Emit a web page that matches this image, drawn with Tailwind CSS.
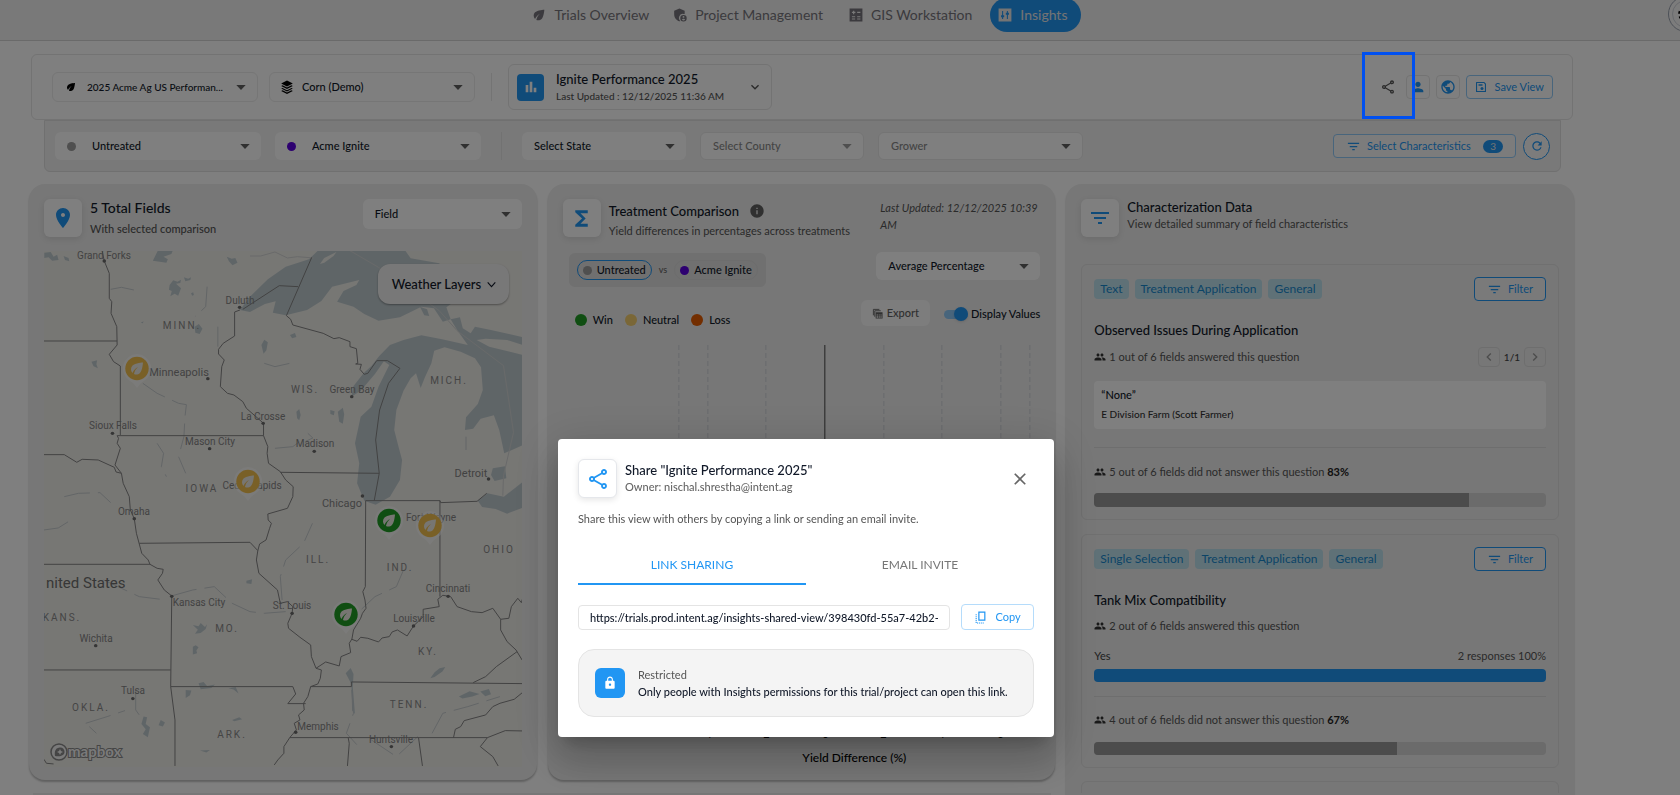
<!DOCTYPE html>
<html lang="en">
<head>
    <meta charset="utf-8">
    <meta name="viewport" content="width=device-width, initial-scale=1.0">
    <title>Insights - Ignite Performance 2025</title>
    <script src="https://cdn.jsdelivr.net/npm/@tailwindcss/browser@4"></script>
</head>
<body class="h-screen overflow-hidden bg-white font-['Lato','Noto_Sans',sans-serif] text-[11px] leading-4 font-medium text-gray-900">

    <!-- Icon set -->
    <svg class="hidden" xmlns="http://www.w3.org/2000/svg">
        <symbol id="i-leaf" viewBox="0 0 24 24"><path d="M6.05 8.05c-2.73 2.73-2.73 7.15-.02 9.88 1.47-3.4 4.09-6.24 7.36-7.93-2.77 2.34-4.71 5.61-5.39 9.32 2.6 1.23 5.8.78 7.95-1.37C19.43 14.47 20 4 20 4S9.53 4.57 6.05 8.05z"/></symbol>
        <symbol id="i-layers" viewBox="0 0 24 24"><path d="M12 1 2 6l10 5 10-5z"/><path d="m4.300 9.100-2.300 1.200 10 5 10-5-2.300-1.200L12 13z"/><path d="m4.300 13.500-2.300 1.200 10 5 10-5-2.300-1.200-7.700 3.900z"/><path d="m4.300 17.600-2.300 1.200L12 23.800l10-5-2.300-1.200-7.700 3.900z"/></symbol>
        <symbol id="i-shield" viewBox="0 0 24 24"><path d="M11 1 2 4.500v6.200c0 5.600 3.800 10.800 9 12.100.6-.1 1.100-.3 1.600-.5A7 7 0 0 1 18 10.100c.7 0 1.400.1 2 .3V4.500z"/><path d="M18 12a5.500 5.500 0 1 0 0 11 5.500 5.500 0 0 0 0-11zm0 1.700a1.600 1.600 0 1 1 0 3.200 1.600 1.600 0 0 1 0-3.200zm0 7.700c-1.100 0-2.100-.6-2.700-1.500.1-.9 1.800-1.400 2.700-1.400s2.600.5 2.700 1.400c-.6.9-1.600 1.500-2.700 1.500z"/></symbol>
        <symbol id="i-grid" viewBox="0 0 24 24"><path fill-rule="evenodd" d="M1 1h22v22H1zM7 4.500v2H5v2h2v2h2v-2h2v-2H9v-2zM14 6.500h5.500v2H14zM5 14h5.500v1.800H5zM5 17.800h5.500v1.800H5zM14 14h5.500v1.800H14zM14 17.800h5.500v1.800H14z"/></symbol>
        <symbol id="i-sliders" viewBox="0 0 24 24"><path fill-rule="evenodd" d="M1 1h22v22H1zM7 5v7.500H5.200v3.500H7v3h1.800v-3h1.800v-3.500H8.800V5zM15.200 5v3h-1.800v3.500h1.800V19H17v-7.500h1.800V8H17V5z"/></symbol>
        <symbol id="i-bars" viewBox="0 0 24 24"><path d="M4 9h4v11H4zM10 4h4v16h-4zM16 13h4v7h-4z"/></symbol>
        <symbol id="i-drop" viewBox="0 0 24 24"><path d="m5 9 7 7.500L19 9z"/></symbol>
        <symbol id="i-chevron" viewBox="0 0 24 24"><path d="M7.410 8.590 12 13.170l4.590-4.580L18 10l-6 6-6-6z"/></symbol>
        <symbol id="i-chevron-thin" viewBox="0 0 24 24"><path fill="none" stroke="currentColor" stroke-width="2" d="m5 8 7 8 7-8"/></symbol>
        <symbol id="i-left" viewBox="0 0 24 24"><path d="M15.400 7.400 14 6l-6 6 6 6 1.400-1.400-4.600-4.600z"/></symbol>
        <symbol id="i-right" viewBox="0 0 24 24"><path d="M8.600 7.400 10 6l6 6-6 6-1.400-1.400 4.600-4.600z"/></symbol>
        <symbol id="i-share" viewBox="0 0 24 24"><path d="M18 16.080c-.76 0-1.440.3-1.960.77L8.910 12.700c.05-.23.09-.46.09-.7s-.04-.47-.09-.7l7.050-4.110c.54.5 1.250.81 2.040.81 1.660 0 3-1.340 3-3s-1.340-3-3-3-3 1.340-3 3c0 .24.04.47.09.7L8.040 9.810C7.500 9.310 6.790 9 6 9c-1.660 0-3 1.340-3 3s1.340 3 3 3c.79 0 1.500-.31 2.040-.81l7.120 4.160c-.05.21-.08.43-.08.65 0 1.610 1.310 2.920 2.920 2.920s2.920-1.310 2.920-2.920-1.310-2.920-2.920-2.920zM18 4c.55 0 1 .45 1 1s-.45 1-1 1-1-.45-1-1 .45-1 1-1zM6 13c-.55 0-1-.45-1-1s.45-1 1-1 1 .45 1 1-.45 1-1 1zm12 7.020c-.55 0-1-.45-1-1s.45-1 1-1 1 .45 1 1-.45 1-1 1z"/></symbol>
        <symbol id="i-person" viewBox="0 0 24 24"><path d="M12 12c2.210 0 4-1.790 4-4s-1.790-4-4-4-4 1.790-4 4 1.790 4 4 4zm0 2c-2.670 0-8 1.340-8 4v2h16v-2c0-2.660-5.330-4-8-4z"/></symbol>
        <symbol id="i-globe" viewBox="0 0 24 24"><path d="M12 2C6.480 2 2 6.480 2 12s4.480 10 10 10 10-4.480 10-10S17.520 2 12 2zm-1 17.930c-3.950-.49-7-3.850-7-7.930 0-.62.08-1.210.21-1.790L9 15v1c0 1.100.9 2 2 2v1.930zm6.900-2.540c-.26-.81-1-1.390-1.900-1.390h-1v-3c0-.55-.45-1-1-1H8v-2h2c.55 0 1-.45 1-1V7h2c1.100 0 2-.9 2-2v-.41c2.930 1.190 5 4.060 5 7.410 0 2.080-.8 3.970-2.100 5.390z"/></symbol>
        <symbol id="i-save" viewBox="0 0 24 24"><path fill-rule="evenodd" d="M3 2h15.500L22 5.500V22H2V3a1 1 0 0 1 1-1zm1.200 2.200v15.600h15.600V6.500l-2.300-2.300z"/><path d="M7 6.500h8v3H7z"/><circle cx="14" cy="15" r="3"/></symbol>
        <symbol id="i-filter" viewBox="0 0 24 24"><path d="M10 18h4v-2h-4v2zM3 6v2h18V6H3zm3 7h12v-2H6v2z"/></symbol>
        <symbol id="i-refresh" viewBox="0 0 24 24"><path d="M17.650 6.350C16.200 4.900 14.210 4 12 4c-4.420 0-7.990 3.580-7.990 8s3.570 8 7.990 8c3.730 0 6.840-2.550 7.730-6h-2.080c-.82 2.330-3.040 4-5.650 4-3.310 0-6-2.690-6-6s2.690-6 6-6c1.660 0 3.140.69 4.220 1.780L13 11h7V4l-2.350 2.350z"/></symbol>
        <symbol id="i-place" viewBox="0 0 24 24"><path d="M12 2C8.130 2 5 5.130 5 9c0 5.250 7 13 7 13s7-7.750 7-13c0-3.870-3.130-7-7-7zm0 9c-1.100 0-2-.9-2-2s.9-2 2-2 2 .9 2 2-.9 2-2 2z"/></symbol>
        <symbol id="i-sigma" viewBox="0 0 24 24"><path d="M18 4H6v2l6.500 6L6 18v2h12v-3h-7l5-5-5-5h7z"/></symbol>
        <symbol id="i-info" viewBox="0 0 24 24"><path d="M12 2C6.480 2 2 6.480 2 12s4.480 10 10 10 10-4.480 10-10S17.520 2 12 2zm1 15h-2v-6h2v6zm0-8h-2V7h2v2z"/></symbol>
        <symbol id="i-people" viewBox="0 0 24 24"><path d="M16 11c1.660 0 3-1.340 3-3s-1.340-3-3-3-3 1.340-3 3 1.340 3 3 3zm-8 0c1.660 0 3-1.340 3-3S9.660 5 8 5 5 6.340 5 8s1.340 3 3 3zm0 2c-2.330 0-7 1.170-7 3.500V19h14v-2.500c0-2.330-4.670-3.500-7-3.500zm8 0c-.29 0-.62.02-.97.05 1.160.84 1.970 1.970 1.970 3.450V19h6v-2.500c0-2.330-4.670-3.500-7-3.500z"/></symbol>
        <symbol id="i-lock" viewBox="0 0 24 24"><path d="M18 8h-1V6c0-2.760-2.240-5-5-5S7 3.240 7 6v2H6c-1.100 0-2 .9-2 2v10c0 1.100.9 2 2 2h12c1.100 0 2-.9 2-2V10c0-1.100-.9-2-2-2zm-6 9c-1.100 0-2-.9-2-2s.9-2 2-2 2 .9 2 2-.9 2-2 2zm3.100-9H8.900V6c0-1.710 1.390-3.100 3.100-3.100 1.710 0 3.100 1.390 3.100 3.100v2z"/></symbol>
        <symbol id="i-close" viewBox="0 0 24 24"><path d="M19 6.400 17.600 5 12 10.600 6.400 5 5 6.400l5.600 5.600L5 17.600 6.400 19l5.600-5.600 5.600 5.600 1.400-1.400-5.600-5.600z"/></symbol>
        <symbol id="i-copy" viewBox="0 0 24 24"><path fill="none" stroke="currentColor" stroke-width="2.200" d="M9 2h11v15H9z"/><path fill="none" stroke="currentColor" stroke-width="2" stroke-dasharray="2 1.500" d="M4 6v16h14"/></symbol>
        <symbol id="i-export" viewBox="0 0 24 24"><path fill="none" stroke="currentColor" stroke-width="2" d="M3 16V3h13M6 19V6h13"/><path fill-rule="evenodd" d="M8 9h15v14H8zm2 5v2.500h3V14zm4.500 0v2.500H17V14zm4 0v2.500H21V14zM10 18v3h3v-3zm4.500 0v3H17v-3zm4 0v3H21v-3z"/></symbol>
        <symbol id="i-pin" viewBox="0 0 32 38"><path d="M16 1a14.500 14.500 0 0 1 7 27l-3 2-4 5-4-5-3-2a14.500 14.500 0 0 1 7-27z" fill="#fff" fill-opacity=".5"/><circle cx="16" cy="15.500" r="11.700" fill="currentColor"/><path transform="translate(7 6.500) scale(.75)" fill="#efece4" d="M6.050 8.050c-2.730 2.730-2.730 7.150-.02 9.880 1.470-3.400 4.090-6.240 7.360-7.930-2.770 2.340-4.710 5.610-5.390 9.320 2.600 1.230 5.800.78 7.950-1.370C19.430 14.470 20 4 20 4S9.530 4.570 6.050 8.050z"/></symbol>
    </svg>

    <!-- Navigation -->
    <header class="relative flex h-[41px] items-start justify-center overflow-hidden border-b border-[#d4d4d4] bg-[#f2f2f2] pr-[68px]">
        <nav class="-mt-0.5 flex items-center text-sm font-normal text-[#77757c]">
            <a href="#" class="flex h-[34px] items-center gap-2 pr-6"><svg class="size-4 fill-current"><use href="#i-leaf"/></svg>Trials Overview</a>
            <a href="#" class="flex h-[34px] items-center gap-2 pr-[26px]"><svg class="size-[14px] fill-current"><use href="#i-shield"/></svg>Project Management</a>
            <a href="#" class="flex h-[34px] items-center gap-2 pr-[18px]"><svg class="size-[14px] fill-current"><use href="#i-grid"/></svg>GIS Workstation</a>
            <a href="#" class="flex h-[34px] items-center gap-2 rounded-full bg-[#2196f3] pr-3.5 pl-2 text-[#e8e8e8]"><svg class="size-[14px] fill-current"><use href="#i-sliders"/></svg>Insights</a>
        </nav>
        <button type="button" aria-label="Settings" class="absolute -top-1 -right-6 flex size-9 items-center justify-center rounded-full border border-gray-400 bg-[#f8f8f8]">
            <span class="flex size-7 items-center justify-center rounded-full border border-gray-300">
                <svg class="size-[18px] fill-none stroke-black stroke-[3]" viewBox="0 0 24 24"><circle cx="12" cy="12" r="9" stroke-dasharray="3.500 3.600"/></svg>
            </span>
        </button>
    </header>

    <main class="pt-[13px] pr-[106px] pl-[29px]">

        <!-- View toolbar -->
        <section class="mr-px ml-0.5 flex h-[66px] items-center rounded-md border border-[#e6e6e6] pr-[19px] pl-5">
            <label class="relative mr-[11px] flex h-[30px] w-[206px] items-center rounded-md border border-[#ececec] pl-3">
                <svg class="mr-2.5 size-3 shrink-0"><use href="#i-leaf"/></svg>
                <select aria-label="Trial" class="w-full appearance-none text-[10px]"><option>2025 Acme Ag US Performan...</option></select>
                <svg class="pointer-events-none absolute right-2 size-4 fill-[#616161]"><use href="#i-drop"/></svg>
            </label>
            <label class="relative flex h-[30px] w-[206px] items-center rounded-md border border-[#ececec] pl-2.5">
                <svg class="mr-2 size-[14px] shrink-0"><use href="#i-layers"/></svg>
                <select aria-label="Crop" class="w-full appearance-none"><option>Corn (Demo)</option></select>
                <svg class="pointer-events-none absolute right-2 size-4 fill-[#616161]"><use href="#i-drop"/></svg>
            </label>
            <div class="mx-4 h-7 w-px bg-[#e8e8e8]"></div>
            <button type="button" class="flex h-[46px] w-[264px] items-center rounded-md border border-[#e6e6e6] px-2 text-left">
                <span class="mr-3 flex size-[27px] items-center justify-center rounded bg-[#2196f3]"><svg class="size-4 fill-white"><use href="#i-bars"/></svg></span>
                <span class="flex flex-col">
                    <span class="text-[13px] leading-[17px]">Ignite Performance 2025</span>
                    <span class="text-[10px] text-[#555]">Last Updated : 12/12/2025 11:36 AM</span>
                </span>
                <svg class="ml-auto size-4 fill-[#555]"><use href="#i-chevron"/></svg>
            </button>
            <div class="ml-auto flex items-center gap-1.5 font-normal text-[#2196f3]">
                <button type="button" aria-label="Share" class="flex size-6 items-center justify-center text-[#555]"><svg class="size-4 fill-current"><use href="#i-share"/></svg></button>
                <button type="button" aria-label="People" class="flex size-6 items-center justify-center rounded border border-[#e6e6e6]"><svg class="size-4 fill-current"><use href="#i-person"/></svg></button>
                <button type="button" aria-label="Public" class="flex size-6 items-center justify-center rounded border border-[#e6e6e6]"><svg class="size-4 fill-current"><use href="#i-globe"/></svg></button>
                <button type="button" class="flex h-6 items-center gap-2 rounded border border-[#90caf9] px-2"><svg class="size-3 fill-current"><use href="#i-save"/></svg>Save View</button>
            </div>
        </section>

        <!-- Filters -->
        <section class="mr-[13px] ml-[15px] flex h-[52px] items-center rounded-b-md border border-[#e0e0e0] bg-[#f3f3f3] px-2.5">
            <label class="relative mr-[14px] flex h-7 w-[206px] items-center rounded-md bg-white pl-3">
                <span class="mr-4 size-[9px] shrink-0 rounded-full bg-[#9e9e9e]"></span>
                <select aria-label="Baseline treatment" class="w-full appearance-none"><option>Untreated</option></select>
                <svg class="pointer-events-none absolute right-2 size-4 fill-[#616161]"><use href="#i-drop"/></svg>
            </label>
            <label class="relative flex h-7 w-[206px] items-center rounded-md bg-white pl-3">
                <span class="mr-4 size-[9px] shrink-0 rounded-full bg-[#5b00e0]"></span>
                <select aria-label="Treatment" class="w-full appearance-none"><option>Acme Ignite</option></select>
                <svg class="pointer-events-none absolute right-2 size-4 fill-[#616161]"><use href="#i-drop"/></svg>
            </label>
            <div class="mx-5 h-7 w-px bg-[#e4e4e4]"></div>
            <label class="relative mr-[14px] flex h-7 w-[164px] items-center rounded-md bg-white pl-3">
                <select aria-label="State" class="w-full appearance-none"><option>Select State</option></select>
                <svg class="pointer-events-none absolute right-2 size-4 fill-[#616161]"><use href="#i-drop"/></svg>
            </label>
            <label class="relative mr-[14px] flex h-7 w-[164px] items-center rounded-md border border-[#e8e8e8] bg-white pl-3">
                <select aria-label="County" disabled class="w-full appearance-none text-[#888] opacity-100"><option>Select County</option></select>
                <svg class="pointer-events-none absolute right-2 size-4 fill-[#9e9e9e]"><use href="#i-drop"/></svg>
            </label>
            <label class="relative flex h-7 w-[205px] items-center rounded-md border border-[#e8e8e8] bg-white pl-3">
                <select aria-label="Grower" class="w-full appearance-none text-[#888]"><option>Grower</option></select>
                <svg class="pointer-events-none absolute right-2 size-4 fill-[#616161]"><use href="#i-drop"/></svg>
            </label>
            <button type="button" class="ml-auto flex h-6 w-[183px] items-center rounded border border-[#90caf9] bg-white/50 px-3 font-normal text-[#2196f3]">
                <svg class="mr-1.5 size-[15px] fill-current"><use href="#i-filter"/></svg>Select Characteristics
                <span class="ml-auto rounded-full bg-[#2196f3] px-[7px] text-[10px] leading-[13px] text-[#e8e8e8]">3</span>
            </button>
            <button type="button" aria-label="Refresh" class="ml-[7px] flex size-[27px] items-center justify-center rounded-full border border-[#2196f3] bg-white/50 text-[#2196f3]"><svg class="size-[14px] fill-current"><use href="#i-refresh"/></svg></button>
        </section>

        <div class="mt-3 grid grid-cols-3 gap-x-[11px] gap-y-[13px]">

            <!-- Fields map -->
            <section class="rounded-2xl bg-[#eee] px-[15px] pt-[15px] pb-[13px] shadow-[0_2px_2px_rgba(0,0,0,0.25)]">
                <div class="flex h-[52px] items-start">
                    <span class="flex size-[38px] items-center justify-center rounded-md bg-white shadow-[0_2px_6px_rgba(0,0,0,0.1)]"><svg class="size-6 fill-[#2196f3]"><use href="#i-place"/></svg></span>
                    <div class="ml-2">
                        <h2 class="text-sm leading-[18px]">5 Total Fields</h2>
                        <p class="mt-1 text-[#555]">With selected comparison</p>
                    </div>
                    <label class="relative ml-auto flex h-[30px] w-[159px] items-center rounded-md bg-white pl-3">
                        <select aria-label="Group by" class="w-full appearance-none"><option>Field</option></select>
                        <svg class="pointer-events-none absolute right-2 size-4 fill-[#616161]"><use href="#i-drop"/></svg>
                    </label>
                </div>
                <div class="relative h-[516px] overflow-hidden bg-[#efeee9]">
                    <svg class="h-full w-full" viewBox="0 0 479 516" preserveAspectRatio="xMinYMin slice" role="img" aria-label="Map of fields">
                        <g transform="translate(-44 -21) scale(.3571 .3333)">
                            <!-- Lakes -->
                            <g fill="#bfcbcf">
                                <path d="M890 62 865 88 800 110 750 148 700 200 672 240 700 246 742 222 772 214 764 248 800 256 860 240 900 213 930 170 1006 150 998 165 962 183 944 215 990 230 1020 252 1060 272 1120 262 1180 230 1215 235 1240 275 1262 268 1250 232 1275 212 1290 180 1230 100 1150 85 1135 62z"/>
                                <path d="M1262 268 1288 262 1296 295 1318 310 1330 290 1375 300 1465 322 1465 345 1420 330 1360 326 1335 330 1370 350 1465 375 1465 645 1412 670 1398 600 1383 556 1346 566 1325 596 1302 600 1305 562 1338 522 1352 480 1347 412 1330 385 1290 365 1245 352 1216 362 1208 400 1190 442 1178 474 1165 430 1150 445 1130 482 1110 540 1104 600 1116 650 1126 690 1120 750 1092 800 1052 824 1020 812 1000 760 1006 700 994 640 1010 560 1040 530 1060 470 1090 405 1075 394 1050 432 1010 482 984 500 990 468 1018 430 1040 408 1062 378 1092 345 1130 330 1180 316 1238 328 1310 345 1280 300z"/>
                                <path d="m1380 715 34-6 4 36-33 8-10-18zM1338 812l27-22 46 10 54-45v78l-45 18-32-14-38-6z"/>
                                <path d="m428 92 14-30 44-6-6 16-22 8 12 8-4 10zM475 165l10-14 12 4 10-6-2 10-12 2 14 14-8 22-10-6-12 8 4-16-8-4zM545 290l12-8 10 14-8 16-12-4zM124 68l18-2 8 14 10-6 4 16-18 2-10-10-12 2zM635 80l14 6 10-2 6 14-14 8-10-12zM946 545l14-12 4 20-4 28-10-6zM732 345l8-16 10 8-4 24-8 10zM256 395l16-4-2 12 4 12-12-6zM830 545l8-8 4 18-4 16-6-6zM925 540l12 4-2 12-10-4zM812 315l14-6 4 12-12 4zM1176 230l20 8 6 20-14-2zM535 190l6-3 2 8-5 2zM515 142l12 4 8-4-2 8-14 4zM178 78l14 6 2 10-12-4zM394 278l8-4-2 6z"/>
                                <path d="m540 1185 16 4 6-10 12 12 6-8-4 14-14 12-16 2 8-12zM540 1250l8-4 8 6-6 10 2 8-12 4zM520 1380l16 2-4 14-12 8zM556 1360l14-4 10 12 22-4-10 10-30 4zM640 1375l20-4 8 20-14-12zM402 1460l10 2-4 20 12 10-6 30-14-10 8-14-12-16zM450 1470l12 8-6 12-12-4zM1205 1345l12-18 14-12 16-4-8 14-22 16zM968 1330l14-16 8 18-2 40 6 80-8-10-2-80zM650 1470l20-8 8 6-22 6zM560 1562l28-2-10 8zM690 1052l16-4-2 14-14-2zM1285 1400l30-16 28 8-20 8-28 6zM1345 1385l24-8 6 16-16 6z"/>
                            </g>
                            <path fill="#efeee9" d="m896 102 12-18 34-18-8 12-26 20z"/>
                            <!-- Rivers -->
                            <g fill="none" stroke="#c6ccce" stroke-dasharray="26 8">
                                <path vector-effect="non-scaling-stroke" d="M310 178 340 172 375 180M400 460 440 490 500 520 522 524 518 560 515 620 500 680 520 730M440 640l18 30-6 40 14 30M580 170l-4 60-30 30M740 400l30 10 50-12M770 655l50-5 35-28M610 290v60M862 610l14 14-20 10M1305 620v40M180 800l40-10 60-2 30 30M123 900l40-6 30-20"/>
                                <path vector-effect="non-scaling-stroke" d="M790 1110 785 1040 800 990 850 940 875 880M480 1098 540 1080 600 1070 650 1120 700 1145 740 1150 800 1145M1130 1020 1110 1070 1050 1100 1010 1140M985 1380 990 1450 970 1510 1000 1545M1040 1530 1110 1580 1170 1520M1210 1510 1240 1450 1310 1430 1400 1400M290 1050l40 20 60 30 60 8M240 1480l60-20 50-18M250 1490l20 20M380 1380v60l20 30"/>
                            </g>
                            <path fill="none" stroke="#d2d4d4" vector-effect="non-scaling-stroke" d="M700 78h30l40-12 35 18 28-4 45 4M980 62l80 50 170 130 50 60 130 105 28 200-28 130-2 60"/>
                            <!-- State lines -->
                            <g fill="none" stroke="#858585" stroke-width="1" stroke-linejoin="round">
                                <path vector-effect="non-scaling-stroke" d="M286 62 292 93 306 130 306 205 313 215 311 250 327 290 328 345 306 373 318 395 337 408 337 615M123 333H328M328 617H738M672 240 657 246 657 318 625 340 612 358 612 372 628 390 621 410 617 470 637 490 655 495 680 515 690 535 738 580 738 617 750 650 748 670 752 700 785 725 800 750 821 770 820 800 805 835 750 852 751 870 760 880 755 895 745 930 727 942 722 962 718 990 725 1030 777 1080 785 1120 805 1115 820 1130 818 1150 806 1180 808 1195 840 1222 870 1245 872 1280 885 1315 900 1320 897 1345 890 1362 870 1370 862 1400 850 1420 852 1440 836 1455 840 1470 824 1480 830 1500 812 1522 795 1550 795 1570 778 1590 768 1605"/>
                                <path vector-effect="non-scaling-stroke" d="M785 727 1062 730M680 238 782 167 835 170M873 82 802 257 814 268 820 285 905 310 935 326 950 323 980 335 980 350 998 356 1002 400 996 402 1012 403 1008 418 1020 433 1030 430 1055 392 1085 392 1120 415 1088 460 1063 540 1052 630 1062 730 1048 812M1024 812H1232L1234 818 1336 814 1363 790M123 674H180L215 697 230 688 275 690 320 712 325 726 340 730M328 617 332 625 328 640 337 655 322 705 340 730 345 760 362 800 365 840 376 866 382 910 390 942 397 970 415 990 420 1003 440 1015 457 1018 455 1030 442 1050 460 1080 481 1098"/>
                                <path vector-effect="non-scaling-stroke" d="M390 940 700 937 722 962M123 1003H420M481 1098 478 1370 490 1470 490 1608M123 1320H478M478 1370H820L828 1392 806 1421H856M1024 812 1023 1070 1016 1085 1022 1110 1025 1135 1015 1150 1010 1165 990 1200 985 1230M885 1315 912 1296 950 1308 955 1280 982 1268 978 1240 985 1228 1000 1234 1010 1222 1030 1225 1060 1236 1070 1224 1090 1220 1098 1206 1113 1200 1140 1218 1158 1188 1185 1160 1185 1138 1230 1130 1226 1108 1240 1096 1262 1100 1280 1130 1320 1145 1350 1148 1380 1135 1402 1168 1425 1165 1432 1130 1450 1105 1460 1118 1465 1100M1232 812V1100M1402 1168 1402 1200 1420 1235 1445 1260 1462 1290M1448 1265 1390 1310 1360 1340 1325 1358M870 1370H984V1356L1465 1361M812 1523H1365L1415 1502 1465 1503M975 1523 978 1540 973 1608M1172 1523 1183 1608M1365 1523 1345 1550 1380 1580 1395 1608M1270 1523 1275 1498 1290 1490 1300 1472 1360 1455 1380 1430 1400 1420 1440 1408 1465 1386M123 1588 130 1600 150 1602"/>
                            </g>
                            <g fill="#6a6a6a">
                                <ellipse cx="292" cy="93" rx="5" ry="5"/><ellipse cx="671" cy="232" rx="5" ry="5"/><ellipse cx="582" cy="446" rx="5" ry="5"/><ellipse cx="985" cy="500" rx="5" ry="5"/><ellipse cx="737" cy="580" rx="5" ry="5"/><ellipse cx="315" cy="610" rx="5" ry="5"/><ellipse cx="587" cy="656" rx="5" ry="5"/><ellipse cx="880" cy="664" rx="5" ry="5"/><ellipse cx="1368" cy="747" rx="5" ry="5"/><ellipse cx="1015" cy="798" rx="5" ry="5"/><ellipse cx="376" cy="866" rx="5" ry="5"/><ellipse cx="1255" cy="1099" rx="5" ry="5"/><ellipse cx="481" cy="1099" rx="5" ry="5"/><ellipse cx="818" cy="1150" rx="5" ry="5"/><ellipse cx="1158" cy="1188" rx="5" ry="5"/><ellipse cx="268" cy="1247" rx="5" ry="5"/><ellipse cx="372" cy="1406" rx="5" ry="5"/><ellipse cx="828" cy="1507" rx="5" ry="5"/><ellipse cx="1096" cy="1550" rx="5" ry="5"/>
                            </g>
                        </g>
                        <g class="font-['Roboto',sans-serif] text-[10px] font-normal" fill="#858585" text-anchor="middle">
                            <text x="60" y="8">Grand Forks</text><text x="196" y="53">Duluth</text><text x="135" y="125" class="text-[11px]">Minneapolis</text><text x="308" y="142">Green Bay</text><text x="219" y="169">La Crosse</text><text x="69" y="178">Sioux Falls</text><text x="166" y="194">Mason City</text><text x="271" y="196">Madison</text><text x="208" y="238">Cedar Rapids</text><text x="427" y="226" class="text-[11px]">Detroit</text><text x="298" y="256" class="text-[11px]">Chicago</text><text x="90" y="264">Omaha</text><text x="387" y="270">Fort Wayne</text><text x="404" y="341">Cincinnati</text><text x="155" y="355">Kansas City</text><text x="248" y="358">St. Louis</text><text x="370" y="371">Louisville</text><text x="52" y="391">Wichita</text><text x="89" y="443">Tulsa</text><text x="274" y="479">Memphis</text><text x="347" y="492">Huntsville</text>
                        </g>
                        <g class="font-['Roboto',sans-serif] text-[10px] font-normal tracking-[2px]" fill="#8a8a8a" text-anchor="middle">
                            <text x="138" y="78">MINN.</text><text x="261" y="142">WIS.</text><text x="405" y="133">MICH.</text><text x="158" y="241">IOWA</text><text x="274" y="312">ILL.</text><text x="356" y="320">IND.</text><text x="455" y="302">OHIO</text><text x="183" y="381">MO.</text><text x="18" y="370">KANS.</text><text x="384" y="404">KY.</text><text x="47" y="460">OKLA.</text><text x="365" y="457">TENN.</text><text x="188" y="487">ARK.</text>
                        </g>
                        <text x="2" y="337" class="font-['Roboto',sans-serif] text-[15px] font-normal" fill="#6e6e6e">nited States</text>
                        <!-- Attribution -->
                        <g fill="none" stroke="#8a8a8a">
                            <circle cx="15" cy="501" r="8" stroke-width="1.500" fill="#f4f4f4"/>
                            <path fill="#8a8a8a" stroke="none" d="M11 505c-1-5 1-8.500 5-8.500 3 0 4.500 2 4.500 4.300 0 3.700-4 5.200-9.500 4.200z"/>
                            <path fill="#f4f4f4" stroke="none" d="m16 498 1 2 2 1-2 1-1 2-1-2-2-1 2-1z"/>
                        </g>
                        <text x="24" y="506" class="font-['Lato',sans-serif] text-[15px] font-bold" fill="#f4f4f4" stroke="#8a8a8a" stroke-width="2" paint-order="stroke">mapbox</text>
                        <!-- Field pins -->
                        <use href="#i-pin" x="77" y="102" width="32" height="38" color="#f3c04f"/>
                        <use href="#i-pin" x="188" y="215" width="32" height="38" color="#f3c04f"/>
                        <use href="#i-pin" x="329" y="254" width="32" height="38" color="#219d25"/>
                        <use href="#i-pin" x="370" y="259" width="32" height="38" color="#f3c04f"/>
                        <use href="#i-pin" x="286" y="348" width="32" height="38" color="#219d25"/>
                    </svg>
                    <button type="button" class="absolute top-[13px] right-[13px] flex h-10 w-[131px] items-center rounded-xl bg-[#f0f0f0] pl-[14px] text-[13px] shadow-[0_1px_2px_rgba(0,0,0,0.35)]">Weather Layers<svg class="ml-1 size-[13px]"><use href="#i-chevron-thin"/></svg></button>
                </div>
            </section>

            <!-- Treatment comparison -->
            <section class="rounded-2xl bg-[#eee] px-[15px] pt-[15px] shadow-[0_2px_2px_rgba(0,0,0,0.25)]">
                <div class="flex h-[53px] items-start">
                    <span class="flex size-[38px] items-center justify-center rounded-md bg-white shadow-[0_2px_6px_rgba(0,0,0,0.1)]"><svg class="size-[25px] fill-[#2196f3]"><use href="#i-sigma"/></svg></span>
                    <div class="mt-[3px] ml-2">
                        <h2 class="flex items-center gap-2.5 text-[13px] leading-[18px]">Treatment Comparison <svg class="size-4 fill-[#616161]"><use href="#i-info"/></svg></h2>
                        <p class="mt-[3px] font-normal text-[#555]">Yield differences in percentages across treatments</p>
                    </div>
                    <p class="ml-auto w-[160px] leading-[17px] font-normal text-[#555] italic">Last Updated: 12/12/2025 10:39 AM</p>
                </div>
                <div class="flex items-start justify-between">
                    <div class="mt-px ml-1.5 flex h-[34px] items-center gap-[7px] rounded-md bg-[#e0e0e0] px-2 whitespace-nowrap">
                        <span class="flex h-5 items-center gap-[5px] rounded-full border border-[#2196f3] px-[5px]"><i class="size-[9px] rounded-full bg-[#9e9e9e]"></i>Untreated</span>
                        <span class="text-[9px] text-[#666]">vs</span>
                        <span class="flex h-5 items-center gap-[5px] rounded-full border border-[#dadada] px-[5px]"><i class="size-[9px] rounded-full bg-[#5b00e0]"></i>Acme Ignite</span>
                    </div>
                    <label class="relative flex h-7 w-[164px] items-center rounded-md bg-white pl-3">
                        <select aria-label="Metric" class="w-full appearance-none"><option>Average Percentage</option></select>
                        <svg class="pointer-events-none absolute right-2 size-4 fill-[#616161]"><use href="#i-drop"/></svg>
                    </label>
                </div>
                <div class="mt-[13px] flex h-7 items-start">
                    <ul class="mt-3 ml-3 flex items-center gap-3">
                        <li class="flex items-center gap-1.5"><i class="size-3 rounded-full bg-[#219d25]"></i>Win</li>
                        <li class="flex items-center gap-1.5"><i class="size-3 rounded-full bg-[#f5ce6e]"></i>Neutral</li>
                        <li class="flex items-center gap-1.5"><i class="size-3 rounded-full bg-[#e65c00]"></i>Loss</li>
                    </ul>
                    <button type="button" class="ml-auto flex h-[26px] items-center gap-1 rounded-md bg-white/70 px-[11px] text-[#616161]"><svg class="size-[11px] fill-current"><use href="#i-export"/></svg>Export</button>
                    <label for="values" class="mt-1.5 ml-[14px] flex items-center">
                        <input id="values" type="checkbox" role="switch" checked class="peer sr-only">
                        <span class="mr-[3px] flex h-[9px] w-6 items-center justify-end rounded-full bg-[#90caf9]"><i class="size-[14px] shrink-0 rounded-full bg-[#2196f3] shadow"></i></span>Display Values
                    </label>
                </div>
                <svg class="mt-[17px] h-[425px] w-full" viewBox="0 0 477 425" role="img" aria-label="Yield difference chart">
                    <g stroke="#cfd2d8" stroke-dasharray="5 3"><path d="M115.500 0v382M144.500 0v382M202.500 0v382M320.500 0v382M378.500 0v382M437.500 0v382M466.500 0v382"/></g>
                    <path stroke="#444" d="M261.500 0v382"/>
                    <g class="text-[11px]" text-anchor="middle"><text x="143" y="393">-4</text><text x="201" y="393">-2</text><text x="262" y="393">0</text><text x="320" y="393">2</text><text x="378" y="393">4</text><text x="437" y="393">6</text></g>
                    <text x="291" y="417" class="text-[12px]" text-anchor="middle">Yield Difference (%)</text>
                </svg>
            </section>

            <!-- Characterization data -->
            <section class="row-span-2 rounded-t-2xl bg-[#eee] px-[15px] pt-[15px] shadow-[0_2px_2px_rgba(0,0,0,0.25)]">
                <div class="flex h-[65px] items-start">
                    <span class="flex size-[38px] items-center justify-center rounded-md bg-white shadow-[0_2px_6px_rgba(0,0,0,0.1)]"><svg class="size-6 fill-[#2196f3]"><use href="#i-filter"/></svg></span>
                    <div class="ml-2">
                        <h2 class="text-[13px] leading-[17px]">Characterization Data</h2>
                        <p class="font-normal text-[#555]">View detailed summary of field characteristics</p>
                    </div>
                </div>

                <article class="rounded-md border border-[#e0e0e0] p-3">
                    <div class="flex h-6 items-center gap-1.5 text-xs font-normal text-[#1788cf]">
                        <span class="rounded-sm bg-[#bfe3ee] px-1.5 leading-5">Text</span>
                        <span class="rounded-sm bg-[#bfe3ee] px-1.5 leading-5">Treatment Application</span>
                        <span class="rounded-sm bg-[#bfe3ee] px-1.5 leading-5">General</span>
                        <button type="button" class="ml-auto flex h-6 w-[72px] items-center justify-center gap-1.5 rounded border border-[#2196f3] bg-white/40 text-[11px] text-[#2196f3]"><svg class="size-[15px] fill-current"><use href="#i-filter"/></svg>Filter</button>
                    </div>
                    <h3 class="mt-[21px] text-[13px]">Observed Issues During Application</h3>
                    <div class="mt-[9px] flex h-5 items-center font-normal text-[#555]">
                        <svg class="mr-[3px] size-3 fill-[#333]"><use href="#i-people"/></svg>1 out of 6 fields answered this question
                        <div class="ml-auto flex items-center gap-1">
                            <button type="button" aria-label="Previous" class="flex h-5 w-[22px] items-center justify-center rounded border border-[#ddd]"><svg class="size-4 fill-[#999]"><use href="#i-left"/></svg></button>
                            <span class="text-[10px] font-medium text-[#444]">1/1</span>
                            <button type="button" aria-label="Next" class="flex h-5 w-[22px] items-center justify-center rounded border border-[#ddd]"><svg class="size-4 fill-[#999]"><use href="#i-right"/></svg></button>
                        </div>
                    </div>
                    <blockquote class="mt-[14px] h-12 rounded-sm bg-white px-[7px] pt-1.5">
                        <p>“None”</p>
                        <p class="mt-[3px] text-[10px] text-[#333]">E Division Farm (Scott Farmer)</p>
                    </blockquote>
                    <hr class="mt-[18px] border-[#ddd]">
                    <p class="mt-4 flex items-center font-normal text-[#555]"><svg class="mr-[3px] size-3 fill-[#333]"><use href="#i-people"/></svg>5 out of 6 fields did not answer this question&nbsp;<b class="text-[#222]">83%</b></p>
                    <div class="mt-[13px] h-[14px] overflow-hidden rounded bg-[#d6d6d6]"><div class="h-full bg-[#989898]" style="width: 83%"></div></div>
                </article>

                <article class="mt-[14px] rounded-md border border-[#e0e0e0] p-3">
                    <div class="flex h-6 items-center gap-1.5 text-xs font-normal text-[#1788cf]">
                        <span class="rounded-sm bg-[#bfe3ee] px-1.5 leading-5">Single Selection</span>
                        <span class="rounded-sm bg-[#bfe3ee] px-1.5 leading-5">Treatment Application</span>
                        <span class="rounded-sm bg-[#bfe3ee] px-1.5 leading-5">General</span>
                        <button type="button" class="ml-auto flex h-6 w-[72px] items-center justify-center gap-1.5 rounded border border-[#2196f3] bg-white/40 text-[11px] text-[#2196f3]"><svg class="size-[15px] fill-current"><use href="#i-filter"/></svg>Filter</button>
                    </div>
                    <h3 class="mt-[21px] text-[13px]">Tank Mix Compatibility</h3>
                    <p class="mt-[10px] flex items-center font-normal text-[#555]"><svg class="mr-[3px] size-3 fill-[#333]"><use href="#i-people"/></svg>2 out of 6 fields answered this question</p>
                    <p class="mt-[14px] flex justify-between font-normal text-[#555]"><span class="text-[#444]">Yes</span><span>2 responses 100%</span></p>
                    <div class="mt-[5px] h-[13px] rounded bg-[#2196f3]"></div>
                    <hr class="mt-[14px] border-[#ddd]">
                    <p class="mt-[15px] flex items-center font-normal text-[#555]"><svg class="mr-[3px] size-3 fill-[#333]"><use href="#i-people"/></svg>4 out of 6 fields did not answer this question&nbsp;<b class="text-[#222]">67%</b></p>
                    <div class="mt-[14px] h-[13px] overflow-hidden rounded bg-[#d6d6d6]"><div class="h-full bg-[#989898]" style="width: 67%"></div></div>
                </article>

                <article class="mt-[13px] h-3 rounded-t-md border border-b-0 border-[#e0e0e0]"></article>
            </section>

            <section class="col-span-2 mx-1 h-0.5 bg-[#eee]"></section>
        </div>
    </main>

    <!-- Share dialog -->
    <div class="fixed inset-0 bg-black/50">
        <div role="dialog" aria-labelledby="share-title" class="absolute top-[439px] left-[558px] w-[496px] rounded-sm bg-white p-5 shadow-[0_11px_15px_-7px_rgba(0,0,0,0.2),0_24px_38px_3px_rgba(0,0,0,0.14),0_9px_46px_8px_rgba(0,0,0,0.12)]">
            <div class="flex items-center">
                <span class="flex size-[39px] items-center justify-center rounded-md border border-gray-200 bg-white shadow-[0_2px_6px_rgba(0,0,0,0.1)]"><svg class="size-6 fill-[#2196f3]"><use href="#i-share"/></svg></span>
                <div class="ml-2">
                    <h2 id="share-title" class="text-[13px] leading-[17px]">Share "Ignite Performance 2025"</h2>
                    <p class="text-[#666]">Owner: nischal.shrestha@intent.ag</p>
                </div>
                <button type="button" aria-label="Close" class="mr-1 ml-auto flex size-5 items-center justify-center"><svg class="size-5 fill-[#666]"><use href="#i-close"/></svg></button>
            </div>
            <p class="mt-[13px] font-normal text-[#555]">Share this view with others by copying a link or sending an email invite.</p>
            <div role="tablist" class="mt-[19px] grid grid-cols-2 text-xs font-normal">
                <button type="button" role="tab" aria-selected="true" class="h-[39px] border-b-2 border-[#2196f3] text-[#2196f3]">LINK SHARING</button>
                <button type="button" role="tab" aria-selected="false" class="h-[39px] border-b-2 border-transparent text-[#777]">EMAIL INVITE</button>
            </div>
            <div class="mt-[19px] flex items-center gap-[11px]">
                <input aria-label="Link" type="text" readonly value="https://trials.prod.intent.ag/insights-shared-view/398430fd-55a7-42b2-" class="h-[25px] min-w-0 flex-1 rounded border border-[#e4e4e4] px-[11px]">
                <button type="button" class="flex h-[26px] w-[73px] items-center justify-center gap-2 rounded border border-[#b5dcfb] font-normal text-[#2196f3]"><svg class="size-[13px]"><use href="#i-copy"/></svg>Copy</button>
            </div>
            <div class="mt-[19px] flex h-[68px] items-center rounded-2xl border border-[#e4e4e4] bg-[#f4f4f4] px-4">
                <span class="flex size-[30px] items-center justify-center rounded-md bg-[#2196f3]"><svg class="size-[14px] fill-white"><use href="#i-lock"/></svg></span>
                <div class="ml-[13px] leading-[17px]">
                    <p class="font-normal text-[#555]">Restricted</p>
                    <p>Only people with Insights permissions for this trial/project can open this link.</p>
                </div>
            </div>
        </div>
        <!-- Highlight round the share button -->
        <div class="absolute top-[52px] right-[265px] h-[67px] w-[53px] border-3 border-[#0050f0]"></div>
    </div>
</body>
</html>
